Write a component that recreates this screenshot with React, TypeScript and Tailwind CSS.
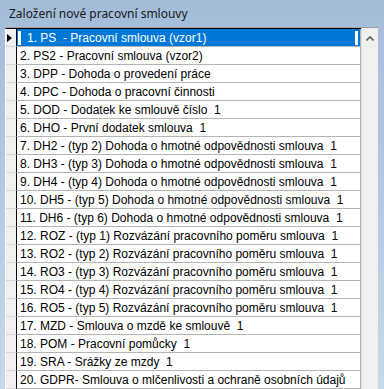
const rows = [
  "1. PS  - Pracovní smlouva (vzor1)",
  "2. PS2 - Pracovní smlouva (vzor2)",
  "3. DPP - Dohoda o provedení práce",
  "4. DPC - Dohoda o pracovní činnosti",
  "5. DOD - Dodatek ke smlouvě číslo  1",
  "6. DHO - První dodatek smlouva  1",
  "7. DH2 - (typ 2) Dohoda o hmotné odpovědnosti smlouva  1",
  "8. DH3 - (typ 3) Dohoda o hmotné odpovědnosti smlouva  1",
  "9. DH4 - (typ 4) Dohoda o hmotné odpovědnosti smlouva  1",
  "10. DH5 - (typ 5) Dohoda o hmotné odpovědnosti smlouva  1",
  "11. DH6 - (typ 6) Dohoda o hmotné odpovědnosti smlouva  1",
  "12. ROZ - (typ 1) Rozvázání pracovního poměru smlouva  1",
  "13. RO2 - (typ 2) Rozvázání pracovního poměru smlouva  1",
  "14. RO3 - (typ 3) Rozvázání pracovního poměru smlouva  1",
  "15. RO4 - (typ 4) Rozvázání pracovního poměru smlouva  1",
  "16. RO5 - (typ 5) Rozvázání pracovního poměru smlouva  1",
  "17. MZD - Smlouva o mzdě ke smlouvě  1",
  "18. POM - Pracovní pomůcky  1",
  "19. SRA - Srážky ze mzdy  1",
  "20. GDPR- Smlouva o mlčenlivosti a ochraně osobních údajů",
];

export default function App() {
  return (
    <div className="h-[389px] w-[384px] overflow-hidden bg-gradient-to-b from-[#a3bcd8] to-[#c6d8ec]">
      <div className="h-[27px] pl-[9px] pt-[6px] font-['Noto_Sans',sans-serif] text-[12px] leading-[16px] text-[#1a1a1a]">
        Založení nové pracovní smlouvy
      </div>
      <div className="ml-[5px] flex w-[373px] border-t border-[#a0a0a0]">
        <div className="w-[356px] border-l border-white border-t border-t-black bg-white">
          {rows.map((text, i) => (
            <div key={i} className="flex h-[18px]">
              <div className="flex w-[11px] items-center border-r border-b border-r-black border-b-[#d8d8d8] bg-[#f0f0f0]">
                {i === 0 && (
                  <svg width="6" height="8" viewBox="0 0 6 8" className="ml-[1px]">
                    <path d="M0 0 L5 4 L0 8 Z" fill="#000" />
                  </svg>
                )}
              </div>
              {i === 0 ? (
                <div className="relative flex flex-1 items-center border-r border-b border-[#b4b4b4] bg-[#0078d7] font-['Liberation_Sans',Arial,sans-serif] text-[12px] whitespace-pre text-white">
                  <span className="ml-[1px] h-[14px] w-[3px] bg-white" />
                  <span className="ml-[6px]">{text}</span>
                  <span className="absolute right-[2px] top-[2px] h-[14px] w-[3px] bg-white" />
                </div>
              ) : (
                <div className="flex flex-1 items-center border-r border-b border-[#b4b4b4] pl-[3px] font-['Liberation_Sans',Arial,sans-serif] text-[12px] whitespace-pre text-black">
                  {text}
                </div>
              )}
            </div>
          ))}
        </div>
        <div className="flex w-[17px] flex-col items-center border-l border-[#dcdcdc] bg-[#f0f0f0] pt-[8px]">
          <svg width="8" height="5" viewBox="0 0 8 5">
            <path d="M0.5 4.5 L4 1 L7.5 4.5" stroke="#606060" strokeWidth="1.6" fill="none" />
          </svg>
        </div>
      </div>
    </div>
  );
}
